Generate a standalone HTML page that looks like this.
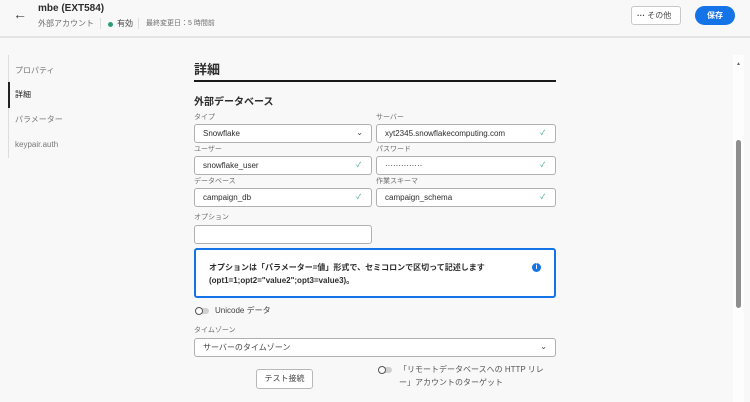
<!DOCTYPE html>
<html><head><meta charset="utf-8"><style>
*{box-sizing:border-box;margin:0;padding:0}
body{width:750px;height:402px;overflow:hidden;background:#f8f8f8;font-family:"Liberation Sans","Noto Sans CJK JP",sans-serif;color:#2c2c2c;position:relative}
.a{position:absolute;white-space:nowrap}
.lbl{font-size:7px;color:#6e6e6e}
.in{position:absolute;height:19px;background:#fff;border:1px solid #b0b0b0;border-radius:3px;font-size:8px;padding:0 8px;line-height:17px;color:#2c2c2c}
.ck{position:absolute;right:10px;top:0;color:#2d9d78;font-size:7px}
.chev{position:absolute;right:8px;top:-1px;font-size:8px;color:#444}
.tg{position:absolute;width:15px;height:8px}
.tg:before{content:"";position:absolute;left:3px;top:1px;width:11px;height:6px;background:#d0d0d0;border-radius:3px}
.tg:after{content:"";position:absolute;left:0;top:0;width:8px;height:8px;box-sizing:border-box;border:1.5px solid #555;border-radius:50%;background:#fff}
</style></head><body>
<div class="a" style="left:0;top:0;width:750px;height:38px;background:#f8f8f8;border-bottom:2px solid #e4e4e4"></div>
<div class="a" style="left:13px;top:6px;font-size:14px;color:#444">&#8592;</div>
<div class="a" style="left:38px;top:3px;font-size:10px;font-weight:bold">mbe (EXT584)</div>
<div class="a" style="left:38px;top:18px;font-size:8px;color:#6e6e6e">外部アカウント</div>
<div class="a" style="left:100px;top:18px;width:1px;height:11px;background:#ddd"></div>
<div class="a" style="left:108px;top:22px;width:5px;height:5px;border-radius:50%;background:#2d9d78"></div>
<div class="a" style="left:117px;top:18px;font-size:8px;color:#444">有効</div>
<div class="a" style="left:138px;top:18px;width:1px;height:11px;background:#ddd"></div>
<div class="a" style="left:146px;top:18px;font-size:7px;color:#6e6e6e">最終変更日：5 時間前</div>
<div class="a" style="left:631px;top:6px;width:50px;height:19px;border:1px solid #c8c8c8;border-radius:3px;background:#fff;font-size:8px;color:#444;line-height:17px;padding-left:5px"><b>···</b> その他</div>
<div class="a" style="left:695px;top:6px;width:40px;height:19px;border-radius:10px;background:#1473e6;color:#fff;font-size:8px;font-weight:bold;text-align:center;line-height:19px">保存</div>

<div class="a" style="left:8px;top:55px;width:1px;height:103px;background:#ddd"></div>
<div class="a" style="left:8px;top:82px;width:2px;height:26px;background:#222"></div>
<div class="a" style="left:15px;top:65px;font-size:8px;color:#777">プロパティ</div>
<div class="a" style="left:15px;top:89px;font-size:8px;color:#222">詳細</div>
<div class="a" style="left:15px;top:114px;font-size:8px;color:#777">パラメーター</div>
<div class="a" style="left:15px;top:140px;font-size:8px;color:#777">keypair.auth</div>

<div class="a" style="left:733px;top:55px;width:11px;height:347px;background:#fdfdfd"></div>
<div class="a" style="left:736px;top:61px;font-size:5px;color:#666">▲</div>
<div class="a" style="left:736px;top:140px;width:5px;height:168px;border-radius:3px;background:#8e8e8e"></div>

<div class="a" style="left:194px;top:59px;font-size:13px;font-weight:bold">詳細</div>
<div class="a" style="left:194px;top:80px;width:362px;height:2px;background:#1a1a1a"></div>
<div class="a" style="left:194px;top:93px;font-size:10px;font-weight:bold">外部データベース</div>

<div class="a lbl" style="left:194px;top:112px">タイプ</div>
<div class="a lbl" style="left:376px;top:112px">サーバー</div>
<div class="in" style="left:194px;top:124px;width:178px">Snowflake<span class="chev">&#8964;</span></div>
<div class="in" style="left:376px;top:124px;width:180px">xyt2345.snowflakecomputing.com<span class="ck">✓</span></div>
<div class="a lbl" style="left:194px;top:144px">ユーザー</div>
<div class="a lbl" style="left:376px;top:144px">パスワード</div>
<div class="in" style="left:194px;top:156px;width:178px">snowflake_user<span class="ck">✓</span></div>
<div class="in" style="left:376px;top:156px;width:180px">··············<span class="ck">✓</span></div>
<div class="a lbl" style="left:194px;top:176px">データベース</div>
<div class="a lbl" style="left:376px;top:176px">作業スキーマ</div>
<div class="in" style="left:194px;top:188px;width:178px">campaign_db<span class="ck">✓</span></div>
<div class="in" style="left:376px;top:188px;width:180px">campaign_schema<span class="ck">✓</span></div>
<div class="a lbl" style="left:194px;top:212px">オプション</div>
<div class="in" style="left:194px;top:225px;width:178px"></div>

<div class="a" style="left:194px;top:248px;width:362px;height:50px;border:2px solid #1473e6;border-radius:3px;background:#fff"></div>
<div class="a" style="left:209px;top:261px;font-size:8px;font-weight:bold;line-height:13px">オプションは「パラメーター=値」形式で、セミコロンで区切って記述します<br>(opt1=1;opt2="value2";opt3=value3)。</div>
<div class="a" style="left:532px;top:263px;width:9px;height:9px;border-radius:50%;background:#1473e6;color:#fff;font-size:7px;font-weight:bold;text-align:center;line-height:9px">i</div>

<div class="tg" style="left:195px;top:307px"></div>
<div class="a" style="left:215px;top:305px;font-size:8px;color:#444">Unicode データ</div>
<div class="a lbl" style="left:194px;top:325px">タイムゾーン</div>
<div class="in" style="left:194px;top:338px;width:362px;color:#444">サーバーのタイムゾーン<span class="chev">&#8964;</span></div>
<div class="a" style="left:256px;top:369px;width:57px;height:20px;border:1px solid #b8b8b8;border-radius:3px;background:#fff;font-size:8px;color:#444;text-align:center;line-height:18px">テスト接続</div>
<div class="tg" style="left:378px;top:366px"></div>
<div class="a" style="left:399px;top:363px;font-size:8px;color:#555;line-height:13px">「リモートデータベースへの HTTP リレ<br>ー」アカウントのターゲット</div>
</body></html>
